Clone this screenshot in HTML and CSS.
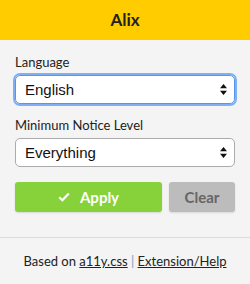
FILE: index.html
```html
<!DOCTYPE html>
<html lang="en">
<head>
    <meta charset="UTF-8">
    <meta name="viewport" content="width=device-width, initial-scale=1.0">
    <title>Alix</title>
    <link rel="stylesheet" href="styles.css">
</head>
<body>
    <header class="title">Alix</header>

    <form class="panel" id="settingsForm">
        <label for="language">Language</label>
        <div class="select-wrap focused">
            <select id="language" name="language">
                <option value="en">English</option>
                <option value="fr">Français</option>
            </select>
            <svg class="arrows" width="7" height="11" viewBox="0 0 7 11" aria-hidden="true">
                <path d="M3.5 0 L7 4.2 L0 4.2 Z M3.5 11 L7 6.8 L0 6.8 Z" fill="#111"/>
            </svg>
        </div>

        <label for="level" class="second">Minimum Notice Level</label>
        <div class="select-wrap">
            <select id="level" name="level">
                <option value="all">Everything</option>
                <option value="warnings">Warnings</option>
                <option value="errors">Errors</option>
            </select>
            <svg class="arrows" width="7" height="11" viewBox="0 0 7 11" aria-hidden="true">
                <path d="M3.5 0 L7 4.2 L0 4.2 Z M3.5 11 L7 6.8 L0 6.8 Z" fill="#111"/>
            </svg>
        </div>

        <div class="actions">
            <button type="submit" class="btn apply">
                <svg width="12" height="10" viewBox="0 0 12 10" aria-hidden="true">
                    <path d="M1.2 5.2 L4.4 8.3 L10.8 1.4" fill="none" stroke="#fff" stroke-width="2.2"/>
                </svg>
                Apply
            </button>
            <button type="button" class="btn clear">Clear</button>
        </div>
    </form>

    <footer class="footer">
        Based on <a href="#">a11y.css</a> <span class="sep">|</span> <a href="#">Extension/Help</a>
    </footer>
</body>
</html>
```

FILE: styles.css
```css
/* General body styling */
body {
    margin: 0;
    font-family: Lato, "Liberation Sans", sans-serif;
    font-size: 13px;
    color: #222;
    background-color: #f4f4f4;
}

/* Header bar */
.title {
    height: 40px;
    line-height: 40px;
    text-align: center;
    background-color: #ffcc00;
    font-size: 17px;
    font-weight: bold;
    color: #222;
}

/* Form panel */
.panel {
    padding: 14px 15px 25px;
    border-bottom: 1px solid #dcdcdc;
}

label {
    display: block;
    line-height: 16px;
    margin-bottom: 5px;
    color: #222;
}

label.second {
    margin-top: 13px;
}

/* Select boxes */
.select-wrap {
    position: relative;
    height: 29px;
    border-radius: 5px;
}

.select-wrap.focused {
    box-shadow: 0 0 0 2px #7fb0f5;
}

select {
    appearance: none;
    -webkit-appearance: none;
    box-sizing: border-box;
    width: 100%;
    height: 29px;
    padding: 0 0 0 9px;
    border: 1px solid #ababab;
    border-radius: 5px;
    background: #fff;
    font-family: "Liberation Sans", sans-serif;
    font-size: 15px;
    color: #111;
    outline: none;
}

.focused select {
    border-color: #5b95ea;
}

.arrows {
    position: absolute;
    right: 8px;
    top: 9px;
    pointer-events: none;
}

/* Buttons */
.actions {
    display: flex;
    gap: 7px;
    margin-top: 15px;
}

.btn {
    height: 30px;
    border: none;
    border-radius: 3px;
    font-family: Lato, "Liberation Sans", sans-serif;
    font-size: 15px;
    font-weight: bold;
    cursor: pointer;
    box-shadow: 0 1px 2px rgba(0, 0, 0, 0.12);
}

.apply {
    flex: 1;
    display: flex;
    align-items: center;
    justify-content: center;
    gap: 10px;
    background-color: #87d13b;
    color: #fff;
}

.clear {
    width: 66px;
    background-color: #bcbcbc;
    color: #666;
}

/* Footer */
.footer {
    padding: 15px 0;
    line-height: 16px;
    text-align: center;
    color: #222;
}

.footer a {
    color: #222;
    text-decoration: underline;
}

.footer .sep {
    color: #7a9cc6;
}
```
